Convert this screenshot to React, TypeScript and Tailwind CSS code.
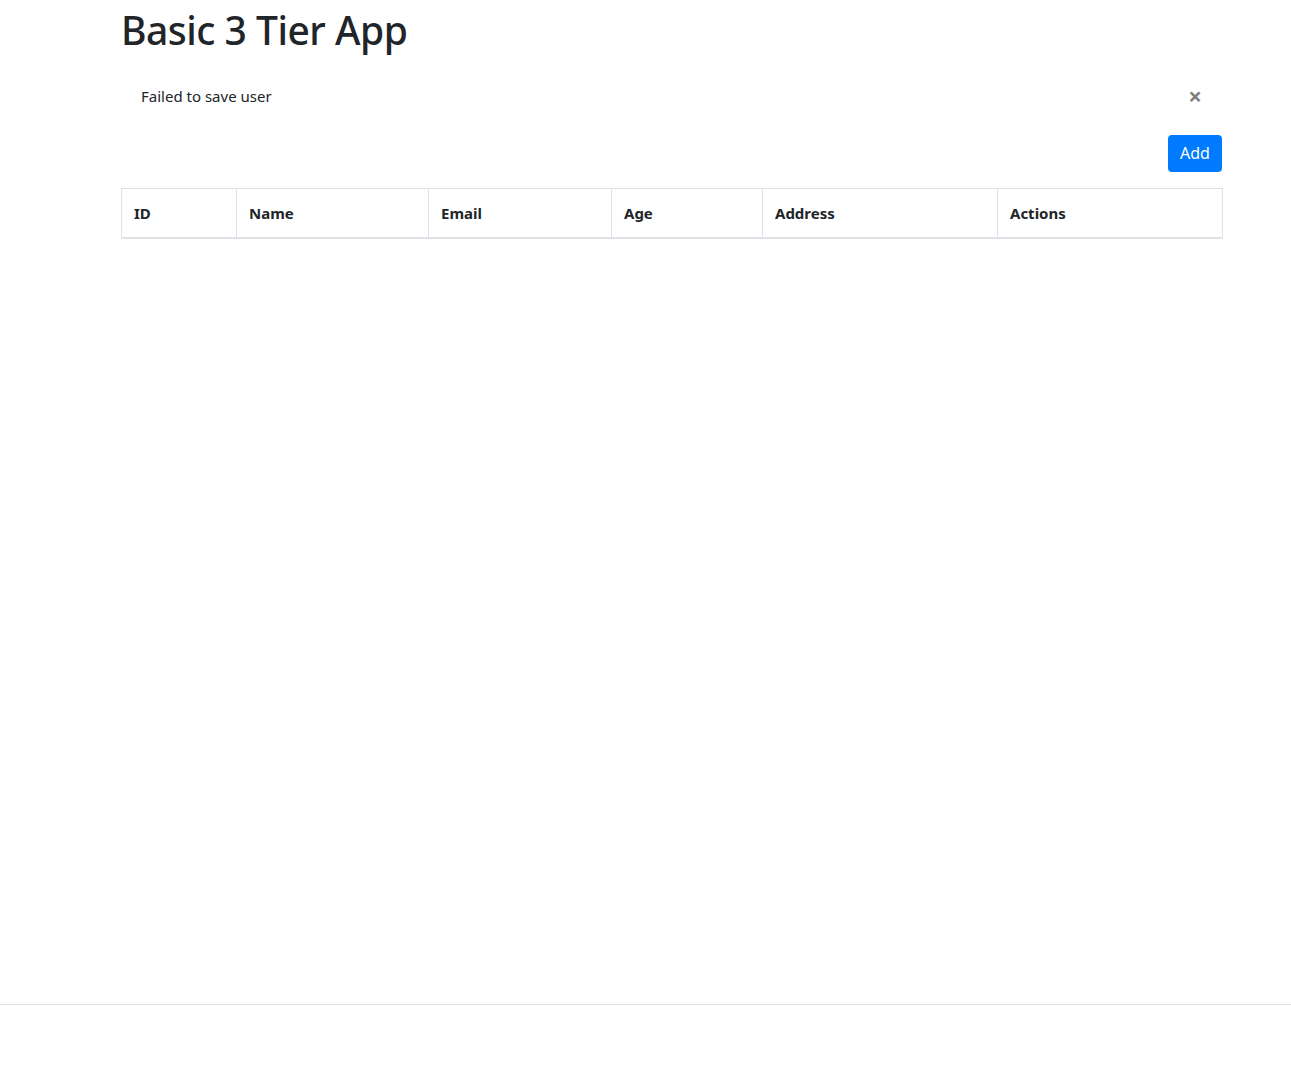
import React from "react";

const columns = [
  { label: "ID", width: "w-[115px]" },
  { label: "Name", width: "w-[192px]" },
  { label: "Email", width: "w-[183px]" },
  { label: "Age", width: "w-[151px]" },
  { label: "Address", width: "w-[235px]" },
  { label: "Actions", width: "w-[225px]" },
];

export default function App() {
  return (
    <div className="min-h-screen bg-white text-[#212529] font-['Noto_Sans','Open_Sans',sans-serif]">
      <main className="h-[1004px] pl-[121px] pr-[69px]">
        <h1 className="pt-[7px] text-[39px] leading-[1.2] font-medium tracking-[-0.5px]">
          Basic 3 Tier App
        </h1>

        {/* dismissible alert, no variant colour */}
        <div className="relative mt-[19px] pt-[11px] pb-[13px] pl-5 pr-16 text-[15px] leading-6">
          Failed to save user
          <button
            type="button"
            aria-label="Close"
            className="absolute right-5 top-[11px] text-[24px] leading-none font-bold text-black opacity-50"
          >
            ×
          </button>
        </div>

        <div className="mt-[14px] flex justify-end">
          <button
            type="button"
            className="h-[37px] w-[54px] rounded-[4px] bg-[#007bff] text-[16px] leading-6 text-white"
          >
            Add
          </button>
        </div>

        <table className="mt-[16px] w-full table-fixed border-collapse text-[15px]">
          <thead>
            <tr>
              {columns.map((c) => (
                <th
                  key={c.label}
                  className={`${c.width} border border-b-2 border-[#dee2e6] px-3 py-3 text-left font-bold leading-6`}
                >
                  {c.label}
                </th>
              ))}
            </tr>
          </thead>
          <tbody />
        </table>
      </main>
      <footer className="h-[78px] border-t border-[#dee2e6]" />
    </div>
  );
}
